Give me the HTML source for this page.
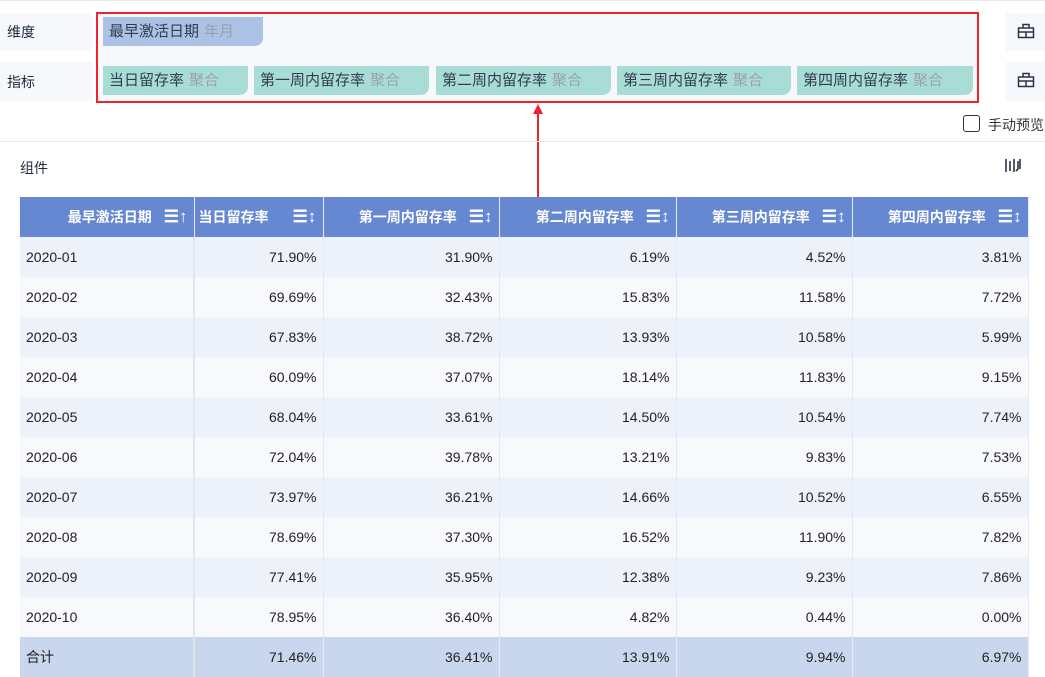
<!DOCTYPE html>
<html><head><meta charset="utf-8"><style>
*{margin:0;padding:0;box-sizing:border-box}
body{width:1045px;height:676px;overflow:hidden;background:#fff;font-family:"Liberation Sans","Noto Sans CJK SC",sans-serif;font-size:14px;color:#1e2a3a;position:relative}
.a{position:absolute}
.band{background:#f7f8fc}
.chip{position:absolute;height:29px;line-height:29px;padding-left:6px;border-radius:0 0 8px 0;font-size:15px;color:#333c4a;white-space:nowrap}
.chip i{font-style:normal;color:#9aa2a8;margin-left:5px}
.d{background:#abc2e6}
.m{background:#a8ddd7}
table{position:absolute;left:20px;top:197px;border-collapse:collapse;table-layout:fixed;width:1008px}
th{background:#6687d1;color:#fff;height:40px;font-weight:bold;font-size:14px;text-align:right;padding-right:6px;border-right:1px solid #e6ebf5;white-space:nowrap}
th span{display:inline-block;margin-left:12px;font-weight:bold;font-size:17px}
td{height:40px;text-align:right;padding-right:6px;border-right:1px solid #e4e8f0;font-size:14px;color:#222}
td:first-child{text-align:left;padding-left:6px;border-right:2px solid #e0e5ee}
tr:nth-child(even) td{background:#edf1f9}
tr:nth-child(odd) td{background:#f7f9fd}
tr.t td{background:#c8d6ee}
</style></head><body>
<div class="a" style="left:0;top:0;width:1045px;height:1px;background:#e6e8ec"></div>
<div class="a band" style="left:0;top:13px;width:93px;height:38px"></div>
<div class="a band" style="left:0;top:62px;width:93px;height:39px"></div>
<div class="a band" style="left:96px;top:12px;width:882px;height:90px"></div>
<div class="a band" style="left:1006px;top:13px;width:39px;height:38px"></div>
<div class="a band" style="left:1006px;top:62px;width:39px;height:39px"></div>
<div class="a" style="left:7px;top:22px">维度</div>
<div class="a" style="left:7px;top:72px">指标</div>
<div class="chip d" style="left:103px;top:17px;width:160px">最早激活日期<i>年月</i></div>
<div class="chip m" style="left:103px;top:66px;width:145px">当日留存率<i>聚合</i></div>
<div class="chip m" style="left:254px;top:66px;width:175px">第一周内留存率<i>聚合</i></div>
<div class="chip m" style="left:436px;top:66px;width:175px">第二周内留存率<i>聚合</i></div>
<div class="chip m" style="left:617px;top:66px;width:174px">第三周内留存率<i>聚合</i></div>
<div class="chip m" style="left:797px;top:66px;width:176px">第四周内留存率<i>聚合</i></div>
<div class="a" style="left:96px;top:12px;width:883px;height:91px;border:2px solid #f0222c"></div>
<svg class="a" style="left:1017px;top:22px" width="18" height="18" viewBox="0 0 18 18" fill="none" stroke="#2a3448" stroke-width="1.5"><path d="M6 6V2.5h6V6M1.5 6h15v9.5h-15zM1.5 10h15M9 10v5.5"/></svg>
<svg class="a" style="left:1017px;top:71px" width="18" height="18" viewBox="0 0 18 18" fill="none" stroke="#2a3448" stroke-width="1.5"><path d="M6 6V2.5h6V6M1.5 6h15v9.5h-15zM1.5 10h15M9 10v5.5"/></svg>
<svg class="a" style="left:531px;top:102px" width="14" height="96"><path d="M7 2L2 12h10z" fill="#f0222c"/><path d="M7 10V96" stroke="#f0222c" stroke-width="2"/></svg>
<div class="a" style="left:963px;top:115px;width:17px;height:17px;border:1.5px solid #333;border-radius:3px"></div>
<div class="a" style="left:988px;top:115px;color:#333">手动预览</div>
<div class="a" style="left:0;top:141px;width:1045px;height:1px;background:#e6e8ec"></div>
<div class="a" style="left:20px;top:158px">组件</div>
<svg class="a" style="left:1004px;top:157px" width="18" height="18" viewBox="0 0 18 18" fill="none" stroke="#2a3448" stroke-width="1.6"><path d="M2 2v13M6 4v10M10 2v13M14 4v8l-2 2M16 2v10"/></svg>
<table>
<colgroup><col style="width:174px"><col style="width:129px"><col style="width:176px"><col style="width:177px"><col style="width:176px"><col style="width:176px"></colgroup>
<tr><th>最早激活日期<span>☰↑</span></th><th style="text-align:left;padding-left:4px">当日留存率<span style="margin-left:24px">☰↕</span></th><th>第一周内留存率<span>☰↕</span></th><th>第二周内留存率<span>☰↕</span></th><th>第三周内留存率<span>☰↕</span></th><th>第四周内留存率<span>☰↕</span></th></tr>
<tr><td>2020-01</td><td>71.90%</td><td>31.90%</td><td>6.19%</td><td>4.52%</td><td>3.81%</td></tr>
<tr><td>2020-02</td><td>69.69%</td><td>32.43%</td><td>15.83%</td><td>11.58%</td><td>7.72%</td></tr>
<tr><td>2020-03</td><td>67.83%</td><td>38.72%</td><td>13.93%</td><td>10.58%</td><td>5.99%</td></tr>
<tr><td>2020-04</td><td>60.09%</td><td>37.07%</td><td>18.14%</td><td>11.83%</td><td>9.15%</td></tr>
<tr><td>2020-05</td><td>68.04%</td><td>33.61%</td><td>14.50%</td><td>10.54%</td><td>7.74%</td></tr>
<tr><td>2020-06</td><td>72.04%</td><td>39.78%</td><td>13.21%</td><td>9.83%</td><td>7.53%</td></tr>
<tr><td>2020-07</td><td>73.97%</td><td>36.21%</td><td>14.66%</td><td>10.52%</td><td>6.55%</td></tr>
<tr><td>2020-08</td><td>78.69%</td><td>37.30%</td><td>16.52%</td><td>11.90%</td><td>7.82%</td></tr>
<tr><td>2020-09</td><td>77.41%</td><td>35.95%</td><td>12.38%</td><td>9.23%</td><td>7.86%</td></tr>
<tr><td>2020-10</td><td>78.95%</td><td>36.40%</td><td>4.82%</td><td>0.44%</td><td>0.00%</td></tr>
<tr class="t"><td>合计</td><td>71.46%</td><td>36.41%</td><td>13.91%</td><td>9.94%</td><td>6.97%</td></tr>
</table>
</body></html>
